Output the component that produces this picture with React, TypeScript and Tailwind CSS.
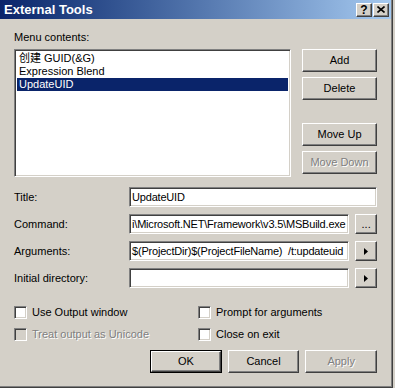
import React from 'react';

const raised =
  'border border-t-white border-l-white border-r-[#404040] border-b-[#404040] shadow-[inset_-1px_-1px_0_#808080] bg-[#d4d0c8]';
const sunken =
  'border border-t-[#808080] border-l-[#808080] border-r-white border-b-white shadow-[inset_1px_1px_0_#404040,inset_-1px_-1px_0_#d4d0c8]';

const Button: React.FC<{ label: string; disabled?: boolean; isDefault?: boolean }> = ({
  label,
  disabled,
  isDefault,
}) => {
  const inner = (
    <div className={`${raised} flex h-full w-full items-center justify-center`}>
      <span className={disabled ? 'text-[#808080] [text-shadow:1px_1px_0_#fff]' : 'text-black'}>{label}</span>
    </div>
  );
  if (isDefault) {
    return <div className="h-[23px] w-[75px] border border-black">{inner}</div>;
  }
  return <div className="h-[23px] w-[75px]">{inner}</div>;
};

const Arrow = () => (
  <svg width="4" height="7" viewBox="0 0 4 7">
    <path d="M0 0 L4 3.5 L0 7 Z" fill="#000" />
  </svg>
);

const Field: React.FC<{ label: string; value: string; extra?: React.ReactNode; wide?: boolean }> = ({
  label,
  value,
  extra,
  wide,
}) => (
  <div className="flex h-[20px] items-center">
    <div className="w-[117px]">{label}</div>
    <div
      className={`${sunken} flex h-[20px] items-center overflow-hidden whitespace-pre bg-white pl-[2px] tracking-[-0.2px] ${
        wide ? 'w-[252px]' : 'w-[224px]'
      }`}
    >
      {value}
    </div>
    {extra && (
      <div className={`${raised} ml-[6px] flex h-[20px] w-[22px] items-center justify-center`}>{extra}</div>
    )}
  </div>
);

const Check: React.FC<{ label: string; disabled?: boolean }> = ({ label, disabled }) => (
  <div className="flex h-[13px] items-center">
    <div className={`${sunken} h-[13px] w-[13px] ${disabled ? 'bg-[#d4d0c8]' : 'bg-white'}`} />
    <span className={`ml-[5px] ${disabled ? 'text-[#808080] [text-shadow:1px_1px_0_#fff]' : ''}`}>{label}</span>
  </div>
);

export default function App() {
  return (
    <div className="h-[388px] w-[395px] bg-[#d4d0c8] font-[family-name:'Liberation_Sans','Noto_Sans_CJK_SC',sans-serif] text-[11px] leading-[13px] text-black">
      <div className="flex h-[388px] w-[393px] flex-col border-r border-b border-r-[#404040] border-b-[#404040]">
        <div className="flex h-full w-full flex-col border-r border-b border-r-[#808080] border-b-[#808080]">
          {/* title bar */}
          <div className="flex h-[19px] items-center bg-linear-to-r from-[#0a246a] to-[#a6caf0] pl-[4px] pr-[2px]">
            <span className="flex-1 text-[13px] font-bold leading-[15px] text-white">External Tools</span>
            <div className={`${raised} flex h-[14px] w-[16px] items-center justify-center text-[12px] font-bold leading-[12px]`}>
              ?
            </div>
            <div className={`${raised} ml-[1px] flex h-[14px] w-[16px] items-center justify-center`}>
              <svg width="8" height="7" viewBox="0 0 8 7">
                <path d="M0.5 0.5 L7.5 6.5 M7.5 0.5 L0.5 6.5" stroke="#000" strokeWidth="1.6" />
              </svg>
            </div>
          </div>

          <div className="flex flex-col px-[14px]">
            <div className="mt-[12px] h-[13px]">Menu contents:</div>

            <div className="mt-[5px] flex">
              <div className={`${sunken} h-[128px] w-[283px] bg-white p-[2px]`}>
                <div className="h-[13px] px-[2px]">创建 GUID(&amp;G)</div>
                <div className="h-[13px] px-[2px]">Expression Blend</div>
                <div className="h-[13px] bg-[#0a246a] px-[2px] text-white">UpdateUID</div>
              </div>
              <div className="ml-[11px] flex flex-col">
                <Button label="Add" />
                <div className="mt-[5px]">
                  <Button label="Delete" />
                </div>
                <div className="mt-[23px]">
                  <Button label="Move Up" />
                </div>
                <div className="mt-[5px]">
                  <Button label="Move Down" disabled />
                </div>
              </div>
            </div>

            <div className="mt-[10px] flex flex-col gap-[7px]">
              <Field label="Title:" value="UpdateUID" wide />
              <Field
                label="Command:"
                value="i\Microsoft.NET\Framework\v3.5\MSBuild.exe"
                extra={<span className="leading-[8px]">...</span>}
              />
              <Field label="Arguments:" value="$(ProjectDir)$(ProjectFileName)  /t:updateuid" extra={<Arrow />} />
              <Field label="Initial directory:" value="" extra={<Arrow />} />
            </div>

            <div className="mt-[18px] flex flex-col gap-[9px]">
              <div className="flex">
                <div className="w-[184px]">
                  <Check label="Use Output window" />
                </div>
                <Check label="Prompt for arguments" />
              </div>
              <div className="flex">
                <div className="w-[184px]">
                  <Check label="Treat output as Unicode" disabled />
                </div>
                <Check label="Close on exit" />
              </div>
            </div>

            <div className="mt-[9px] flex gap-[6px] pl-[136px]">
              <Button label="OK" isDefault />
              <Button label="Cancel" />
              <Button label="Apply" disabled />
            </div>
          </div>
        </div>
      </div>
    </div>
  );
}
